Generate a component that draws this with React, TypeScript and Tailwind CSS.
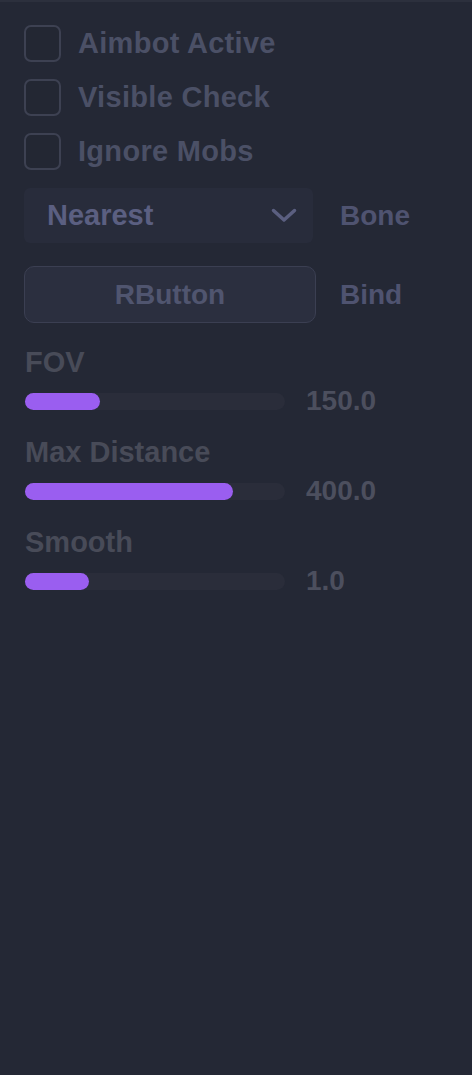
import React from "react";

const font = { fontFamily: '"Liberation Sans", Arial, sans-serif' };

function Check({ label }: { label: string }) {
  return (
    <div className="flex items-center gap-[17px]">
      <div className="w-[37px] h-[37px] rounded-[7px] border-2 border-[#3d4152] bg-[#232733]" />
      <span className="text-[29px] leading-none font-bold text-[#4b5066] tracking-[0.3px]">{label}</span>
    </div>
  );
}

function Slider({ label, fill, value }: { label: string; fill: number; value: string }) {
  return (
    <div className="flex flex-col">
      <span className="text-[29px] leading-none font-bold text-[#484b58]">{label}</span>
      <div className="flex items-center mt-[10px]">
        <div className="w-[260px] h-[17px] rounded-full bg-[#2a2d3a] relative">
          <div className="h-[17px] rounded-full bg-[#9a5ef0]" style={{ width: fill }} />
        </div>
        <span className="ml-[21px] text-[28px] leading-none font-bold text-[#4c4f5e]">{value}</span>
      </div>
    </div>
  );
}

export default function App() {
  return (
    <div style={font} className="w-[472px] h-[1075px] bg-[#242835] border-t-2 border-[#2c303d] overflow-hidden">
      <div className="pl-[24px] pt-[23px] flex flex-col">
        <div className="flex flex-col gap-[17px]">
          <Check label="Aimbot Active" />
          <Check label="Visible Check" />
          <Check label="Ignore Mobs" />
        </div>
        <div className="flex items-center mt-[18px]">
          <div className="w-[289px] h-[55px] rounded-[6px] bg-[#282c3b] flex items-center justify-between pl-[23px] pr-[16px]">
            <span className="text-[29px] leading-none font-bold text-[#5b5f81]">Nearest</span>
            <svg width="26" height="15" viewBox="0 0 26 15" fill="none">
              <path d="M2.5 2.5 L13 12 L23.5 2.5" stroke="#5b5f80" strokeWidth="3.5" strokeLinecap="round" strokeLinejoin="round" />
            </svg>
          </div>
          <span className="ml-[27px] text-[28px] leading-none font-bold text-[#4f5370]">Bone</span>
        </div>
        <div className="flex items-center mt-[23px]">
          <div className="w-[292px] h-[57px] rounded-[10px] bg-[#2b2f3f] border-[1.5px] border-[#3b3f52] flex items-center justify-center">
            <span className="text-[28px] leading-none font-bold text-[#50556f]">RButton</span>
          </div>
          <span className="ml-[24px] text-[28px] leading-none font-bold text-[#4f5370]">Bind</span>
        </div>
        <div className="flex flex-col gap-[23px] mt-[25px] pl-[1px]">
          <Slider label="FOV" fill={75} value="150.0" />
          <Slider label="Max Distance" fill={208} value="400.0" />
          <Slider label="Smooth" fill={64} value="1.0" />
        </div>
      </div>
    </div>
  );
}
